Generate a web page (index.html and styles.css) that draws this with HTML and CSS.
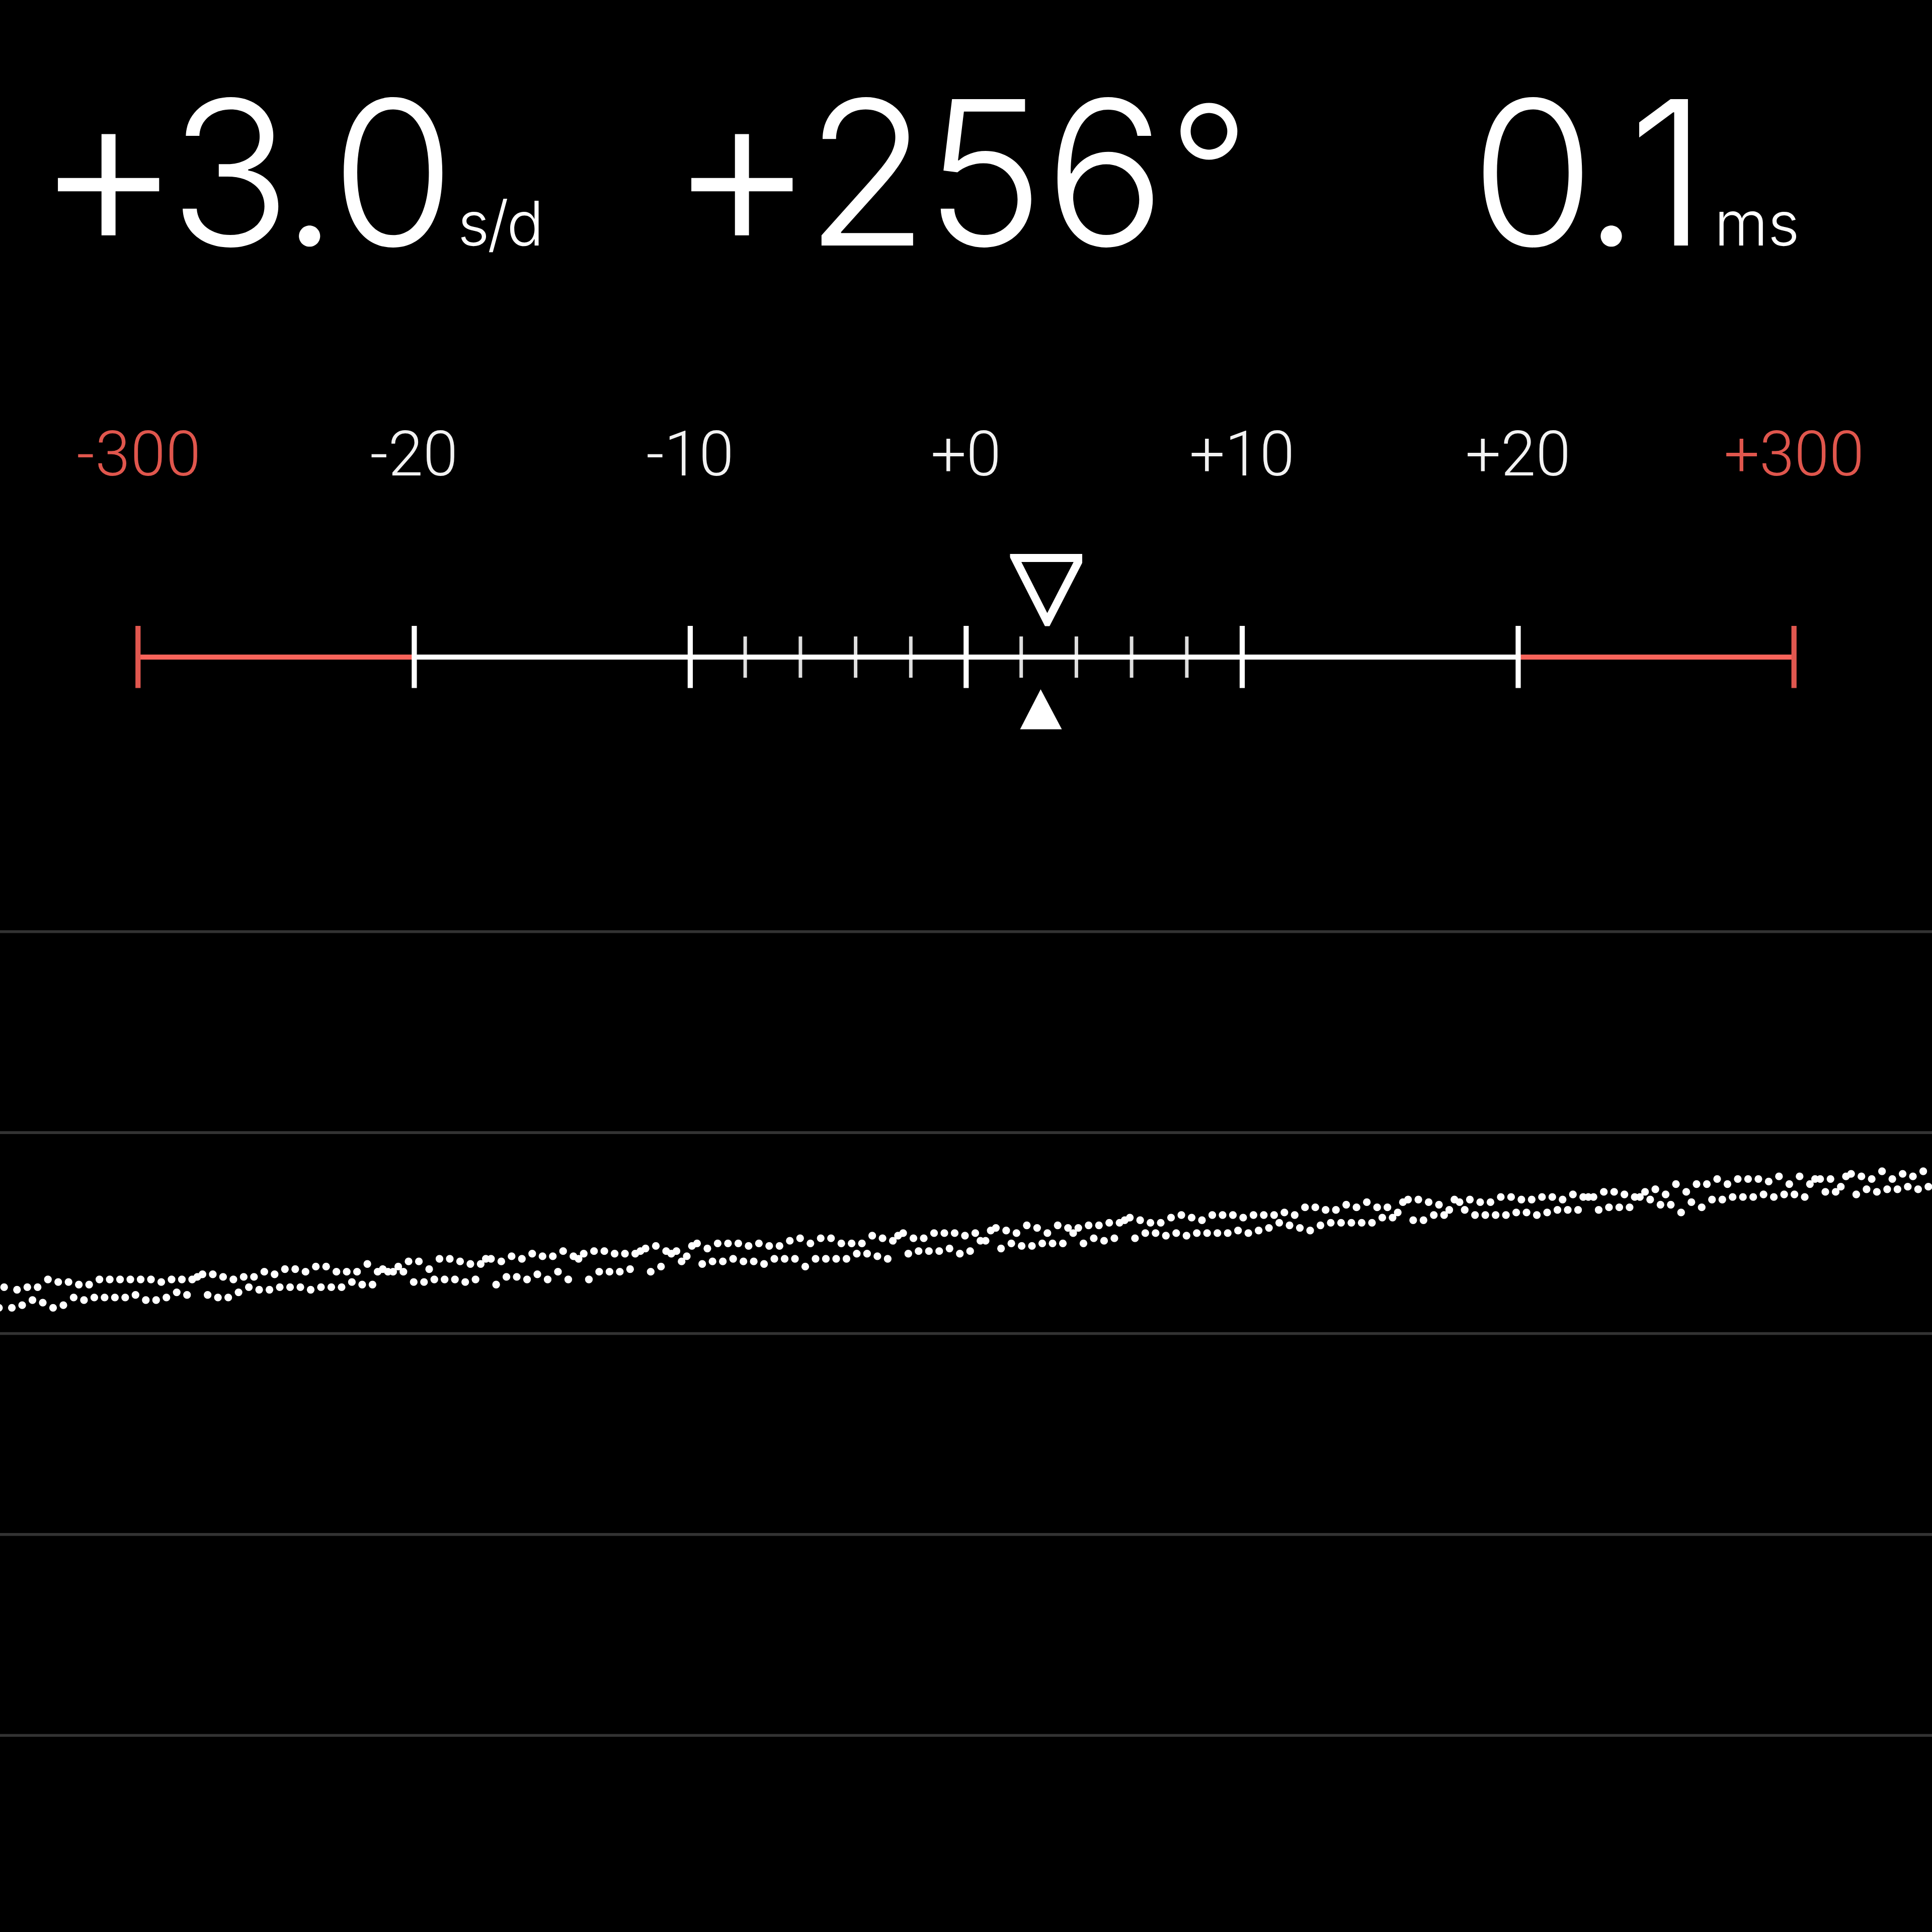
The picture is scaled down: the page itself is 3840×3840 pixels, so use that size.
FILE: index.html
```html
<!DOCTYPE html>
<html lang="en">
<head>
<meta charset="utf-8">
<title>Timegrapher</title>
<link rel="stylesheet" href="styles.css">
</head>
<body>
<main class="screen">
  <header class="readings">
    <div class="reading rate"><span class="value"><span class="sign">+</span><span class="whole">3</span><span class="dot">.</span>0</span><span class="unit">s/d</span></div>
    <div class="reading amplitude"><span class="value"><span class="sign">+</span><span class="hundreds">2</span><span class="tens">5</span>6<span class="degree">°</span></span></div>
    <div class="reading beat"><span class="value"><span class="whole">0</span><span class="dot">.</span>1</span><span class="unit">ms</span></div>
  </header>

  <section class="gauge">
    <div class="labels">
      <span class="limit low">-300</span><span>-20</span><span>-10</span><span>+0</span><span>+10</span><span>+20</span><span class="limit">+300</span>
    </div>
    <svg class="scale" viewBox="0 1080 3840 400">
      <g class="red">
        <path d="M274.3 1306H822.9M3017.1 1306H3565.7"/>
        <path class="end" d="M274.3 1244V1367.5M3565.7 1244V1367.5"/>
      </g>
      <path class="minor" d="M1481.1 1265V1347M1590.9 1265V1347M1700.6 1265V1347M1810.3 1265V1347M2029.7 1265V1347M2139.4 1265V1347M2249.1 1265V1347M2358.9 1265V1347"/>
      <path class="major" d="M822.9 1306H3017.1M823.4 1244V1367.5M1371.9 1244V1367.5M1920.3 1244V1367.5M2469 1244V1367.5M3017.5 1244V1367.5"/>
      <svg x="2007.5" y="1101" width="143.5" height="143.5" viewBox="0 0 143.5 143.5">
        <path class="average" d="M9.5 8H139.5L74 135Z"/>
      </svg>
      <path class="current" d="M2068.4 1370L2110.5 1449.5H2027.5Z"/>
    </svg>
  </section>

  <section class="trace">
    <svg viewBox="0 330 750 420">
      <path class="grid" d="M0 361.6H750M0 439.6H750M0 517.6H750M0 595.6H750M0 673.6H750"/>
      <path class="beats" id="beats"/>
    </svg>
  </section>
</main>
<script src="trace.js"></script>
</body>
</html>
```

FILE: styles.css
```css
body {
  margin: 0;
  background: #000;
}

.screen {
  display: flex;
  flex-direction: column;
  width: 3840px;
  height: 3840px;
  overflow: hidden;
  background: #000;
  color: #fff;
}

.readings {
  display: grid;
  grid-template-columns: 1259px 1578px 1fr;
  height: 658px;
  padding: 142px 0 0 86px;
}

.reading {
  display: flex;
  align-items: baseline;
  font-family: "Inter", sans-serif;
  white-space: nowrap;
}

.value {
  font-size: 400px;
  font-weight: 300;
  line-height: 400px;
}

.sign {
  margin-left: -16px;
  font-size: 446px;
  font-weight: 280;
  line-height: 0;
  vertical-align: -6px;
}

.rate .sign {
  letter-spacing: -25px;
}

.rate .whole {
  letter-spacing: -20px;
}

.rate .dot {
  letter-spacing: -14px;
}

.rate .unit {
  margin-left: 5px;
  letter-spacing: -4px;
}

.amplitude .sign {
  letter-spacing: -20px;
}

.hundreds {
  letter-spacing: -8px;
}

.tens {
  letter-spacing: 1px;
}

.degree {
  margin-left: 5px;
  font-size: 356px;
  font-weight: 340;
  line-height: 0;
  vertical-align: 22px;
}

.beat .whole {
  letter-spacing: -24px;
}

.beat .dot {
  letter-spacing: -23px;
}

.beat .unit {
  margin-left: 14px;
}

.unit {
  font-size: 122px;
  font-weight: 300;
  line-height: 122px;
}

.labels {
  display: grid;
  grid-template-columns: repeat(7, 1fr);
  height: 280px;
  padding-top: 33px;
  box-sizing: border-box;
  font-family: "Roboto", sans-serif;
  font-size: 125px;
  font-weight: 300;
  line-height: 140px;
  text-align: center;
  color: #f2f2f2;
}

.limit {
  color: #e0564d;
}

.low {
  padding-left: 4px;
  letter-spacing: 1px;
}

.scale {
  display: block;
  width: 3840px;
  height: 400px;
}

.scale path {
  fill: none;
  stroke: #fff;
  stroke-width: 10.24;
}

.scale .red path {
  stroke: #f9635a;
}

.scale .red .end {
  stroke: #e0574f;
}

.scale .minor {
  stroke: #dedede;
  stroke-width: 7;
}

.scale .average {
  stroke-width: 16;
}

.scale .current {
  fill: #fff;
  stroke: none;
}

.trace {
  margin-top: 209.6px;
}

.trace svg {
  display: block;
  width: 3840px;
  height: 2150.4px;
}

.grid {
  stroke: #333;
  stroke-width: 1.1;
}

.beats {
  fill: none;
  stroke: #fff;
  stroke-width: 3;
  stroke-linecap: round;
}
```

FILE: trace.js
```js
// Beat offsets, alternating tick and tock, one every two units across the strip.
const segments = [
  [4.6, [507,500,506,499,504,499,505,496,507,497,506,497,503,498,504,498,503,496,503,496,503,496,503,496,502,496,504,496,504,497,503,496,501,496,502,496,495,494,502,494,503,495,503,496,501,495,499,495,500,493,500,494,499,492,499,492,499,493,500,491,499,491,499,493,499,493,497,493,498,490,498,493,492,493,493,491]],
  [156.6, [493,489,497,489,497,492,496,488,496,488,496,489,497,490,496,490,488,488,498,489,495,487,495,488,496,486,494,487,496,487,493,485,496,487,488,486,496,485,493,485,493,486,493,486,492,486,485,484,493,483,491,485,486,485,489,487,483,482,490,484,489,482,489,482,488,482,489,483,489,482,490,483,488,483,488,481,488,480]],
  [312.6, [491,482,488,480,488,480,488,482,488,482,486,482,486,479,487,480,488,481,479,478,486,480,485,480,485,478,485,478,484,478,486,479,485,478,481,481,477,476,484,477,482,478,483,475,483,476,482,478,482,475,482,476,478,476,482,475,480,475,481,474,480,474,473,472,480,473,478,474,478,474,479,472,478,471,479,472,478,473,478]],
  [470.6, [471,478,471,478,471,477,472,478,471,477,471,476,471,474,470,475,471,476,468,477,468,475,469,474,469,474,467,474,468,474,466,474,468,472,468,472,470,466,465,473,465,473,466,471,467,471,469,465,466,469,465,471,466,471,466,471,464,471,464,470,465,470,465,471,464,470,464,469,465,469,463,469,464,464,464,469,462,468]],
  [626.6, [462,468,463,468,464,464,462,465,461,467,463,467,459,470,462,466,459,468,459,465,457,465,459,464,457,464,457,464,457,463,458,464,456,463,459,463,456,464,459,457,457,462,457,462,460,456,455,463,456,461,457,462,454,461,457,461,455,460,456,461,454,460]]
];

let d = "M-0.4 507.6h0M1.6 499.6h0";
for (const [start, ys] of segments) {
  ys.forEach((y, i) => {
    d += `M${(start + i * 2).toFixed(1)} ${y + 0.6}h0`;
  });
}
document.getElementById("beats").setAttribute("d", d);
```
